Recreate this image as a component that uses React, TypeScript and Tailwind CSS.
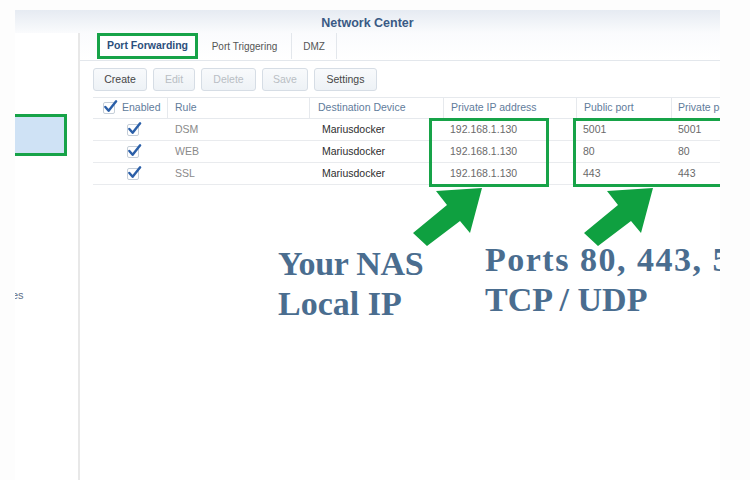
import React from "react";

const rows = [
  { rule: "DSM", device: "Mariusdocker", ip: "192.168.1.130", pub: "5001", priv: "5001" },
  { rule: "WEB", device: "Mariusdocker", ip: "192.168.1.130", pub: "80", priv: "80" },
  { rule: "SSL", device: "Mariusdocker", ip: "192.168.1.130", pub: "443", priv: "443" },
];

const buttons = [
  { label: "Create", w: "w-[54px]", on: true },
  { label: "Edit", w: "w-[42px]", on: false },
  { label: "Delete", w: "w-[55px]", on: false },
  { label: "Save", w: "w-[46px]", on: false },
  { label: "Settings", w: "w-[63px]", on: true },
];

function Check({ size = 12 }: { size?: number }) {
  return (
    <div
      className="relative border border-[#c5ced8] bg-white rounded-[2px]"
      style={{ width: size, height: size }}
    >
      <svg viewBox="0 0 16 16" className="absolute left-[-1px] top-[-4px] w-[15px] h-[15px]">
        <path d="M2.5 8.5 L6 12.5 L14 2.5" fill="none" stroke="#2b5fa8" strokeWidth="2.6" strokeLinecap="round" strokeLinejoin="round" />
      </svg>
    </div>
  );
}

export default function App() {
  return (
    <div className="w-[750px] h-[480px] bg-[#fdfdfd] overflow-hidden font-['Liberation_Sans',Arial,sans-serif]">
      <div className="pt-[10px] pl-[15px]">
        <div className="relative w-[705px] h-[470px] bg-white overflow-hidden flex flex-col">
          {/* title bar */}
          <div className="h-[23px] shrink-0 bg-gradient-to-b from-[#e6ebf2] to-[#fafbfd] flex items-center justify-center pt-[3px]">
            <span className="text-[12.5px] font-bold text-[#3a5a85]">Network Center</span>
          </div>

          <div className="flex flex-1 min-h-0">
            {/* sidebar */}
            <div className="w-[65px] shrink-0 border-r-2 border-[#e8e8e8] overflow-hidden flex flex-col">
              <div className="mt-[81px] w-[52px] h-[42px] bg-[#cfe2f5] border-t-[3px] border-r-[3px] border-b-[3px] border-[#17a348] flex items-center">
                <span className="text-[11px] text-[#4a79b4] -ml-[3px]">l</span>
              </div>
              <div className="mt-[134px] text-[11px] text-[#5f7089] -ml-[3px] leading-none">es</div>
            </div>

            {/* main */}
            <div className="flex-1 flex flex-col">
              {/* tabs */}
              <div className="h-[28px] border-b border-[#e3e7ec] pl-[17px] flex items-start bg-gradient-to-b from-[#fafbfd] to-white">
                <div className="w-[101px] h-[26px] border-[3px] border-[#17a348] bg-white flex items-center justify-center text-[10.5px] font-bold text-[#2c4f7c]">
                  Port Forwarding
                </div>
                <div className="w-[94px] h-[26px] border-r border-[#e3e7ec] flex items-center justify-center text-[10px] text-[#555]">
                  Port Triggering
                </div>
                <div className="w-[45px] h-[26px] border-r border-[#e3e7ec] flex items-center justify-center text-[10px] text-[#555]">
                  DMZ
                </div>
              </div>

              {/* toolbar */}
              <div className="mt-[7px] pl-[13px] flex gap-[6px]">
                {buttons.map((b) => (
                  <div
                    key={b.label}
                    className={`${b.w} h-[23px] rounded-[3px] border border-[#d6dde5] bg-gradient-to-b from-[#f8fafc] to-[#eef2f6] flex items-center justify-center text-[10.5px] ${
                      b.on ? "text-[#464646]" : "text-[#b9bec4]"
                    }`}
                  >
                    {b.label}
                  </div>
                ))}
              </div>

              {/* table */}
              <div className="mt-[6px] ml-[13px] w-[680px]">
                <div className="h-[22px] border-t border-b border-[#e6e9ed] flex items-center text-[10.5px] text-[#5f7c9b]">
                  <div className="w-[75px] h-full border-r border-[#e6e9ed] flex items-center pl-[10px] gap-[7px]">
                    <Check size={12} />
                    <span>Enabled</span>
                  </div>
                  <div className="w-[142px] h-full border-r border-[#e6e9ed] flex items-center pl-[7px]">Rule</div>
                  <div className="w-[134px] h-full border-r border-[#e6e9ed] flex items-center pl-[8px]">Destination Device</div>
                  <div className="w-[133px] h-full border-r border-[#e6e9ed] flex items-center pl-[7px]">Private IP address</div>
                  <div className="w-[95px] h-full border-r border-[#e6e9ed] flex items-center pl-[7px]">Public port</div>
                  <div className="flex-1 h-full flex items-center pl-[6px]">Private port</div>
                </div>
                {rows.map((r) => (
                  <div key={r.rule} className="h-[22px] border-b border-[#e9ebee] flex items-center text-[10.5px]">
                    <div className="w-[75px] pl-[34px] flex items-center">
                      <Check size={12} />
                    </div>
                    <div className="w-[142px] pl-[7px] text-[#8a8a8a]">{r.rule}</div>
                    <div className="w-[134px] pl-[12px] text-[#2e2e2e]">{r.device}</div>
                    <div className="w-[133px] pl-[6px] text-[#6a6a6a]">{r.ip}</div>
                    <div className="w-[95px] pl-[6px] text-[#6a6a6a]">{r.pub}</div>
                    <div className="flex-1 pl-[6px] text-[#6a6a6a]">{r.priv}</div>
                  </div>
                ))}
              </div>
            </div>
          </div>

          {/* annotations */}
          <div className="absolute left-[414px] top-[108px] w-[120px] h-[69px] border-[3px] border-[#17a348]" />
          <div className="absolute left-[558px] top-[108px] w-[200px] h-[69px] border-[3px] border-[#17a348]" />

          <svg className="absolute left-[-15px] top-[-10px] w-[750px] h-[480px] pointer-events-none" viewBox="0 0 750 480">
            <polygon points="482,188 436,191 447,205 413,233 427,246 460,221 470,233" fill="#0fa040" />
            <polygon points="653,188 607,191 618,205 584,233 598,246 631,221 641,233" fill="#0fa040" />
          </svg>

          <div className="absolute left-[263px] top-[234px] font-['Liberation_Serif',serif] font-bold text-[34px] leading-[40px] text-[#4a6d8f] whitespace-nowrap">
            <div className="tracking-[-0.3px]">Your NAS</div>
            <div>Local IP</div>
          </div>
          <div className="absolute left-[470px] top-[230px] font-['Liberation_Serif',serif] font-bold text-[34px] leading-[40px] text-[#4a6d8f] whitespace-nowrap">
            <div className="tracking-[1.5px]">Ports 80, 443, 5001</div>
            <div>TCP / UDP</div>
          </div>
        </div>
      </div>
    </div>
  );
}
